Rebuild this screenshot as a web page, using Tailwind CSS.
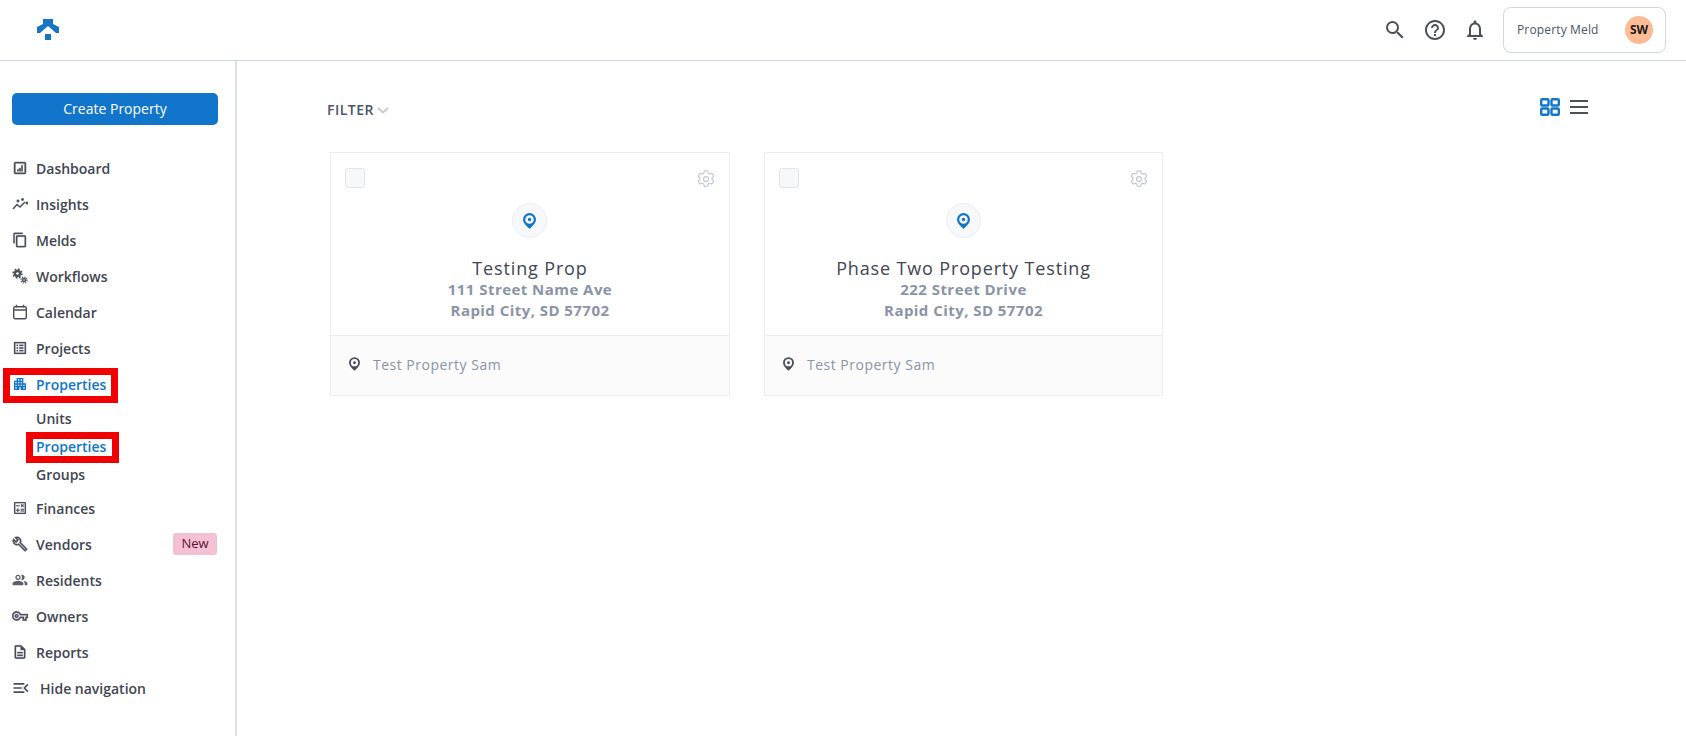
<!DOCTYPE html>
<html lang="en">
<head>
    <meta charset="UTF-8">
    <title>Properties</title>
    <script src="https://cdn.jsdelivr.net/npm/@tailwindcss/browser@4"></script>
</head>
<body class="bg-white font-['Open_Sans',sans-serif] text-[#3f4553] h-[736px] overflow-hidden">
    <header class="h-[61px] border-b border-[#cfd6de] flex items-center">
        <svg class="ml-[37px] mt-[-1px] w-[22px] h-[21px]" viewBox="0 0 22 21" fill="#1a74c4"><path d="M6 0h10v5l6 3v6h-3l-8-7-8 7H0V8l6-3z"/><path d="M8 15h6v6H8z"/></svg>
        <div class="ml-auto flex items-center">
            <svg class="w-[24px] h-[24px] text-[#4a4f5c]" viewBox="0 0 24 24" fill="currentColor"><path d="M15.5 14h-.79l-.28-.27A6.47 6.47 0 0 0 16 9.5 6.5 6.5 0 1 0 9.5 16c1.61 0 3.09-.59 4.23-1.57l.27.28v.79l5 4.99L20.49 19l-4.99-5zm-6 0C7.01 14 5 11.99 5 9.5S7.01 5 9.5 5 14 7.01 14 9.5 11.99 14 9.5 14z"/></svg>
            <svg class="ml-[16px] w-[24px] h-[24px] text-[#4a4f5c]" viewBox="0 0 24 24" fill="currentColor"><path d="M11 18h2v-2h-2v2zm1-16C6.48 2 2 6.48 2 12s4.48 10 10 10 10-4.48 10-10S17.52 2 12 2zm0 18c-4.41 0-8-3.59-8-8s3.59-8 8-8 8 3.59 8 8-3.59 8-8 8zm0-14c-2.21 0-4 1.79-4 4h2c0-1.1.9-2 2-2s2 .9 2 2c0 2-3 1.75-3 5h2c0-2.25 3-2.5 3-5 0-2.21-1.79-4-4-4z"/></svg>
            <svg class="ml-[16px] w-[24px] h-[24px] text-[#4a4f5c]" viewBox="0 0 24 24" fill="currentColor"><path d="M12 22c1.1 0 2-.9 2-2h-4c0 1.1.9 2 2 2zm6-6v-5c0-3.07-1.63-5.64-4.5-6.32V4c0-.83-.67-1.5-1.5-1.5s-1.5.67-1.5 1.5v.68C7.64 5.36 6 7.92 6 11v5l-2 2v1h16v-1l-2-2zm-2 1H8v-6c0-2.48 1.51-4.5 4-4.5s4 2.02 4 4.5v6z"/></svg>
            <div class="ml-[16px] mr-[20px] w-[163px] h-[46px] rounded-[8px] border border-[#cfd6de] flex items-center pl-[13px] pr-[12px] justify-between">
                <span class="text-[12px] tracking-[0.15px] text-[#4a5568]">Property Meld</span>
                <span class="w-[28px] h-[28px] rounded-full bg-[#ffbb96] flex items-center justify-center text-[12px] font-bold text-[#1a1a1a]">SW</span>
            </div>
        </div>
    </header>
    <div class="flex h-[675px]">
        <aside class="w-[237px] shrink-0 border-r-2 border-[#dde2e9] pt-[32px] text-[14px] font-semibold">
            <button class="ml-[12px] w-[206px] h-[32px] pb-[2px] rounded-[5px] bg-[#1175cc] text-white text-[14px] font-medium">Create Property</button>
            <nav class="mt-[25px]">
                <a class="h-[36px] flex items-center pl-[12px]"><svg class="w-[16px] h-[16px] mr-[8px] text-[#4a4f5c]" viewBox="0 0 24 24" fill="currentColor" stroke="currentColor" stroke-width="0.7"><path d="M19 3H5c-1.1 0-2 .9-2 2v14c0 1.1.9 2 2 2h14c1.1 0 2-.9 2-2V5c0-1.1-.9-2-2-2zm0 16H5V5h14v14zM8 14h2v3H8zm3-2h2v5h-2zm3-4h2v9h-2z"/></svg>Dashboard</a>
                <a class="h-[36px] flex items-center pl-[12px]"><svg class="w-[16px] h-[16px] mr-[8px] text-[#4a4f5c]" viewBox="0 0 16 16" fill="none" stroke="currentColor" stroke-width="1.5"><path d="M1 13l4-4.5 3 2.5 5-5"/><circle cx="6" cy="5" r=".7" fill="currentColor"/><circle cx="15" cy="7" r=".7" fill="currentColor"/><circle cx="10.5" cy="3.5" r=".7" fill="currentColor"/></svg>Insights</a>
                <a class="h-[36px] flex items-center pl-[12px]"><svg class="w-[16px] h-[16px] mr-[8px] text-[#4a4f5c]" viewBox="0 0 24 24" fill="currentColor" stroke="currentColor" stroke-width="0.5"><path d="M16 1H4c-1.1 0-2 .9-2 2v14h2V3h12V1zm3 4H8c-1.1 0-2 .9-2 2v14c0 1.1.9 2 2 2h11c1.1 0 2-.9 2-2V7c0-1.1-.9-2-2-2zm0 16H8V7h11v14z"/></svg>Melds</a>
                <a class="h-[36px] flex items-center pl-[12px]"><svg class="w-[16px] h-[16px] mr-[8px] text-[#4a4f5c]" viewBox="0 0 16 16" fill="none" stroke="currentColor"><circle cx="5.5" cy="5.5" r="2.5" stroke-width="2.4"/><circle cx="5.5" cy="5.5" r="4.4" stroke-width="1.6" stroke-dasharray="1.7 1.75"/><circle cx="12" cy="12" r="1.5" stroke-width="1.5"/><circle cx="12" cy="12" r="3" stroke-width="1.2" stroke-dasharray="1.3 1.05"/></svg>Workflows</a>
                <a class="h-[36px] flex items-center pl-[12px]"><svg class="w-[16px] h-[16px] mr-[8px] text-[#4a4f5c]" viewBox="0 0 16 16" fill="none" stroke="currentColor" stroke-width="1.4"><rect x="1.7" y="2.7" width="12.6" height="12" rx="1.5"/><path d="M1.7 6h12.6M4.5 .8v2.5M11.5 .8v2.5"/></svg>Calendar</a>
                <a class="h-[36px] flex items-center pl-[12px]"><svg class="w-[16px] h-[16px] mr-[8px] text-[#4a4f5c]" viewBox="0 0 24 24" fill="currentColor" stroke="currentColor" stroke-width="0.4"><path d="M19 5v14H5V5h14m1.1-2H3.9c-.5 0-.9.4-.9.9v16.2c0 .4.4.9.9.9h16.2c.4 0 .9-.5.9-.9V3.900c0-.5-.5-.9-.9-.9zM11 7h6v2h-6V7zm0 4h6v2h-6v-2zm0 4h6v2h-6zM7 7h2v2H7zm0 4h2v2H7zm0 4h2v2H7z"/></svg>Projects</a>
                <a class="h-[36px] flex items-center pl-[12px] text-[#1175cc]"><svg class="w-[16px] h-[16px] mr-[8px]" viewBox="0 0 24 24" fill="currentColor"><path d="M17 11V3H7v4H3v14h8v-4h2v4h8V11h-4zM7 19H5v-2h2v2zm0-4H5v-2h2v2zm0-4H5V9h2v2zm4 4H9v-2h2v2zm0-4H9V9h2v2zm0-4H9V5h2v2zm4 8h-2v-2h2v2zm0-4h-2V9h2v2zm0-4h-2V5h2v2zm4 12h-2v-2h2v2zm0-4h-2v-2h2v2z"/></svg><span class="relative">Properties<span class="absolute left-[-33px] right-[-12px] top-[-6px] bottom-[-8px] border-[7px] border-[#f00000]"></span></span></a>
                <div class="py-[2px] pl-[36px]">
                    <a class="h-[28px] flex items-center">Units</a>
                    <a class="h-[28px] flex items-center text-[#1175cc]"><span class="relative">Properties<span class="absolute left-[-10px] right-[-13px] top-[-4px] bottom-[-6px] border-[7px] border-[#f00000]"></span></span></a>
                    <a class="h-[28px] flex items-center">Groups</a>
                </div>
                <a class="h-[36px] flex items-center pl-[12px]"><svg class="w-[16px] h-[16px] mr-[8px] text-[#4a4f5c]" viewBox="0 0 24 24" fill="currentColor" stroke="currentColor" stroke-width="0.2"><path d="M19 3H5c-1.1 0-2 .9-2 2v14c0 1.1.9 2 2 2h14c1.1 0 2-.9 2-2V5c0-1.1-.9-2-2-2zm0 16H5V5h14v14zM6.25 7.72h5v1.5h-5zM13 15.75h5v1.5h-5zm0-2.5h5v1.5h-5zM8 18h1.5v-2h2v-1.5h-2v-2H8v2H6V16h2zm6.09-7.05l1.41-1.41 1.41 1.41 1.06-1.06-1.41-1.42 1.41-1.41L16.97 6 15.5 7.41 14.09 6l-1.06 1.06 1.41 1.41-1.41 1.42z"/></svg>Finances</a>
                <a class="h-[36px] flex items-center pl-[12px]"><svg class="w-[16px] h-[16px] mr-[8px] text-[#4a4f5c]" viewBox="0 0 24 24" fill="currentColor" stroke="currentColor" stroke-width="0.6"><path d="M22.61 18.99l-9.08-9.08c.93-2.34.45-5.1-1.44-7C9.79.61 6.21.4 3.66 2.26L7.5 6.11 6.08 7.52 2.25 3.69C.39 6.23.6 9.82 2.9 12.11c1.86 1.86 4.57 2.35 6.89 1.48l9.11 9.11c.39.39 1.02.39 1.41 0l2.3-2.3c.4-.38.4-1.01 0-1.41zm-3 1.6l-9.46-9.46c-.61.45-1.29.72-2 .82-1.36.2-2.79-.21-3.83-1.25C3.37 9.76 2.93 8.5 3 7.26l3.09 3.09 4.24-4.24-3.09-3.09c1.24-.07 2.49.37 3.44 1.31 1.08 1.08 1.49 2.57 1.24 3.96-.12.71-.42 1.37-.88 1.96l9.45 9.45-.88.88z"/></svg>Vendors<span class="ml-auto mr-[18px] w-[44px] h-[22px] rounded-[3px] bg-[#f3c1d3] text-[#5c0f33] text-[13px] font-medium flex items-center justify-center">New</span></a>
                <a class="h-[36px] flex items-center pl-[12px]"><svg class="w-[16px] h-[16px] mr-[8px] text-[#5a5f6c]" viewBox="0 0 24 24" fill="currentColor"><path d="M16.67 13.13C18.04 14.06 19 15.32 19 17v3h4v-3c0-2.18-3.57-3.47-6.33-3.87z"/><path d="M15 12c2.21 0 4-1.79 4-4s-1.79-4-4-4c-.47 0-.91.1-1.33.24C14.5 5.27 15 6.58 15 8s-.5 2.73-1.33 3.76c.42.14.86.24 1.33.24z"/><path d="M9 12c2.21 0 4-1.79 4-4s-1.79-4-4-4-4 1.79-4 4 1.79 4 4 4zm0-6c1.1 0 2 .9 2 2s-.9 2-2 2-2-.9-2-2 .9-2 2-2z"/><path d="M9 13c-2.67 0-8 1.34-8 4v3h16v-3c0-2.66-5.33-4-8-4z"/></svg>Residents</a>
                <a class="h-[36px] flex items-center pl-[12px]"><svg class="w-[16px] h-[16px] mr-[8px] text-[#4a4f5c]" viewBox="0 0 24 24" fill="currentColor" stroke="currentColor" stroke-width="0.5"><path d="M22 19h-6v-4h-2.68c-1.14 2.42-3.6 4-6.32 4-3.86 0-7-3.14-7-7s3.14-7 7-7c2.72 0 5.17 1.58 6.32 4H24v6h-2v4zm-4-2h2v-4h2v-2H11.94l-.23-.67C11.01 8.34 9.11 7 7 7c-2.76 0-5 2.24-5 5s2.24 5 5 5c2.11 0 4.01-1.34 4.71-3.33l.23-.67H18v4zM7 15c-1.65 0-3-1.35-3-3s1.35-3 3-3 3 1.35 3 3-1.35 3-3 3zm0-4c-.55 0-1 .45-1 1s.45 1 1 1 1-.45 1-1-.45-1-1-1z"/></svg>Owners</a>
                <a class="h-[36px] flex items-center pl-[12px]"><svg class="w-[16px] h-[16px] mr-[8px] text-[#4a4f5c]" viewBox="0 0 24 24" fill="currentColor" stroke="currentColor" stroke-width="0.5"><path d="M8 16h8v2H8zm0-4h8v2H8zm6-10H6c-1.1 0-2 .9-2 2v16c0 1.1.89 2 1.99 2H18c1.1 0 2-.9 2-2V8l-6-6zm4 18H6V4h7v5h5v11z"/></svg>Reports</a>
                <a class="h-[36px] flex items-center pl-[11px]"><svg class="w-[20px] h-[20px] mr-[9px] text-[#4a4f5c]" viewBox="0 0 24 24" fill="currentColor"><path d="M3 18h13v-2H3v2zm0-5h10v-2H3v2zm0-7v2h13V6H3zm18 9.59L17.42 12 21 8.41 19.59 7l-5 5 5 5L21 15.59z"/></svg>Hide navigation</a>
            </nav>
        </aside>
        <main class="flex-1 pl-[90px] pr-[98px] pt-[39px]">
            <div class="flex items-center justify-between h-[20px]">
                <div class="mt-[-2px] flex items-center text-[14px] font-semibold tracking-[0.5px] text-[#4a5568]">FILTER<svg class="ml-[3px] mt-[3px] w-[12px] h-[7px] text-[#c4c9d4]" viewBox="0 0 11 7" fill="none" stroke="currentColor" stroke-width="1.8"><path d="M.5 1l5 4.5 5-4.5"/></svg></div>
                <div class="flex items-center mt-[-6px]">
                    <svg class="w-[20px] h-[18px] text-[#1175cc]" viewBox="0 0 20 18" fill="none" stroke="currentColor" stroke-width="2.4"><rect x="1.2" y="1.2" width="7.3" height="6.3" rx="1"/><rect x="11.5" y="1.2" width="7.3" height="6.3" rx="1"/><rect x="1.2" y="10.5" width="7.3" height="6.3" rx="1"/><rect x="11.5" y="10.5" width="7.3" height="6.3" rx="1"/></svg>
                    <svg class="ml-[10px] w-[18px] h-[14px] text-[#4a4f5c]" viewBox="0 0 18 14" fill="currentColor"><path d="M0 0h18v2H0zM0 6h18v2H0zM0 12h18v2H0z"/></svg>
                </div>
            </div>
            <div class="mt-[32px] ml-[3px] flex gap-[34px]">
                <div class="w-[400px] h-[244px] border border-[#ebedf0] flex flex-col">
                    <div class="flex-1 relative flex flex-col items-center pt-[50px]">
                        <span class="absolute left-[14px] top-[15px] w-[20px] h-[20px] rounded-[3px] bg-[#f7f8fa] border border-[#e3e5ea]"></span>
                        <svg class="absolute right-[13px] top-[16px] w-[20px] h-[20px] text-[#c5c8d3]" viewBox="0 0 24 24" fill="none" stroke="currentColor" stroke-width="1.5"><path d="M9.6 3.3c.1-.7.7-1.1 1.3-1.1h2.2c.6 0 1.2.4 1.3 1.1l.2 1.4c.1.4.4.8.8 1l.3.1c.4.2.9.2 1.3 0l1.3-.5c.6-.2 1.3 0 1.6.6l1.1 1.9c.3.5.2 1.2-.3 1.6l-1.1.9c-.3.3-.5.7-.5 1.1v.3c0 .4.2.9.5 1.1l1.1.9c.5.4.6 1.1.3 1.6l-1.100 1.900c-.3.6-1 .8-1.6.6l-1.300-.5c-.4-.2-.9-.2-1.300 0l-.3.100c-.4.2-.7.6-.8 1l-.2 1.400c-.1.7-.7 1.100-1.300 1.100h-2.200c-.6 0-1.200-.4-1.300-1.100l-.2-1.400c-.1-.4-.4-.8-.8-1l-.3-.1c-.4-.2-.9-.2-1.300 0l-1.300.5c-.6.2-1.300 0-1.600-.6l-1.100-1.900c-.3-.5-.2-1.200.3-1.600l1.100-.9c.3-.3.5-.7.5-1.100v-.3c0-.4-.2-.9-.5-1.100l-1.100-.9c-.5-.4-.6-1.100-.3-1.600l1.100-1.900c.3-.6 1-.8 1.600-.6l1.300.5c.4.2.9.2 1.300 0l.3-.1c.4-.2.7-.6.8-1z"/><circle cx="12" cy="12" r="3"/></svg>
                        <span class="ml-[-2px] w-[35px] h-[35px] rounded-full bg-[#f7f8fa] border border-[#eceef2] flex items-center justify-center"><svg class="w-[13px] h-[16px] text-[#1175cc]" viewBox="0 0 13 16" fill="currentColor"><path fill-rule="evenodd" d="M6.5 0A6.5 6.5 0 0 0 0 6.5C0 10 3.5 13 6.5 16 9.5 13 13 10 13 6.5A6.5 6.5 0 0 0 6.5 0zm0 2.2a4.3 4.3 0 1 1 0 8.6 4.3 4.3 0 0 1 0-8.6zm0 2.6a1.7 1.7 0 1 0 0 3.4 1.7 1.7 0 0 0 0-3.4z"/></svg></span>
                        <div class="mt-[18px] text-[18px] leading-[24px] font-medium tracking-[0.85px] text-[#3f4553]">Testing Prop</div>
                        <div class="mt-[-1px] text-[15px] leading-[21px] font-bold tracking-[0.45px] text-[#8a94a6] text-center">111 Street Name Ave<br>Rapid City, SD 57702</div>
                    </div>
                    <div class="h-[60px] pb-[3px] border-t border-[#ebedf0] bg-[#fbfbfc] flex items-center pl-[18px] text-[14px] tracking-[0.5px] text-[#8a94a6]">
                        <svg class="w-[11px] h-[14px] mr-[13px] text-[#4a4f5c]" viewBox="0 0 13 16" fill="currentColor"><path fill-rule="evenodd" d="M6.5 0A6.5 6.5 0 0 0 0 6.5C0 10 3.5 13 6.5 16 9.5 13 13 10 13 6.5A6.5 6.5 0 0 0 6.5 0zm0 2.2a4.3 4.3 0 1 1 0 8.6 4.3 4.3 0 0 1 0-8.600zm0 2.600a1.7 1.7 0 1 0 0 3.4 1.7 1.7 0 0 0 0-3.4z"/></svg>Test Property Sam
                    </div>
                </div>
                <div class="w-[399px] h-[244px] border border-[#ebedf0] flex flex-col">
                    <div class="flex-1 relative flex flex-col items-center pt-[50px]">
                        <span class="absolute left-[14px] top-[15px] w-[20px] h-[20px] rounded-[3px] bg-[#f7f8fa] border border-[#e3e5ea]"></span>
                        <svg class="absolute right-[13px] top-[16px] w-[20px] h-[20px] text-[#c5c8d3]" viewBox="0 0 24 24" fill="none" stroke="currentColor" stroke-width="1.5"><path d="M9.6 3.3c.1-.7.7-1.1 1.3-1.1h2.2c.6 0 1.2.4 1.3 1.1l.2 1.4c.1.4.4.8.8 1l.3.1c.4.2.9.2 1.3 0l1.3-.5c.6-.2 1.3 0 1.6.6l1.1 1.9c.3.5.2 1.2-.3 1.6l-1.1.9c-.3.3-.5.7-.5 1.1v.3c0 .4.2.9.5 1.1l1.1.9c.5.4.6 1.1.3 1.6l-1.100 1.900c-.3.6-1 .8-1.6.6l-1.300-.5c-.4-.2-.9-.2-1.300 0l-.3.100c-.4.2-.7.6-.8 1l-.2 1.400c-.1.7-.7 1.100-1.300 1.100h-2.200c-.6 0-1.200-.4-1.300-1.100l-.2-1.400c-.1-.4-.4-.8-.8-1l-.3-.1c-.4-.2-.9-.2-1.300 0l-1.300.5c-.6.2-1.300 0-1.600-.6l-1.100-1.900c-.3-.5-.2-1.200.3-1.600l1.100-.9c.3-.3.5-.7.5-1.100v-.3c0-.4-.2-.9-.5-1.100l-1.100-.9c-.5-.4-.6-1.100-.3-1.600l1.100-1.900c.3-.6 1-.8 1.600-.6l1.300.5c.4.2.9.2 1.300 0l.3-.1c.4-.2.7-.6.8-1z"/><circle cx="12" cy="12" r="3"/></svg>
                        <span class="w-[35px] h-[35px] rounded-full bg-[#f7f8fa] border border-[#eceef2] flex items-center justify-center"><svg class="w-[13px] h-[16px] text-[#1175cc]" viewBox="0 0 13 16" fill="currentColor"><path fill-rule="evenodd" d="M6.5 0A6.5 6.5 0 0 0 0 6.5C0 10 3.5 13 6.5 16 9.5 13 13 10 13 6.5A6.5 6.5 0 0 0 6.5 0zm0 2.2a4.3 4.3 0 1 1 0 8.6 4.3 4.3 0 0 1 0-8.6zm0 2.6a1.7 1.7 0 1 0 0 3.4 1.7 1.7 0 0 0 0-3.4z"/></svg></span>
                        <div class="mt-[18px] text-[18px] leading-[24px] font-medium tracking-[0.85px] text-[#3f4553]">Phase Two Property Testing</div>
                        <div class="mt-[-1px] text-[15px] leading-[21px] font-bold tracking-[0.45px] text-[#8a94a6] text-center">222 Street Drive<br>Rapid City, SD 57702</div>
                    </div>
                    <div class="h-[60px] pb-[3px] border-t border-[#ebedf0] bg-[#fbfbfc] flex items-center pl-[18px] text-[14px] tracking-[0.5px] text-[#8a94a6]">
                        <svg class="w-[11px] h-[14px] mr-[13px] text-[#4a4f5c]" viewBox="0 0 13 16" fill="currentColor"><path fill-rule="evenodd" d="M6.5 0A6.5 6.5 0 0 0 0 6.5C0 10 3.5 13 6.5 16 9.5 13 13 10 13 6.5A6.5 6.5 0 0 0 6.5 0zm0 2.2a4.3 4.3 0 1 1 0 8.6 4.3 4.3 0 0 1 0-8.6zm0 2.6a1.7 1.7 0 1 0 0 3.4 1.7 1.7 0 0 0 0-3.4z"/></svg>Test Property Sam
                    </div>
                </div>
            </div>
        </main>
    </div>
</body>
</html>
